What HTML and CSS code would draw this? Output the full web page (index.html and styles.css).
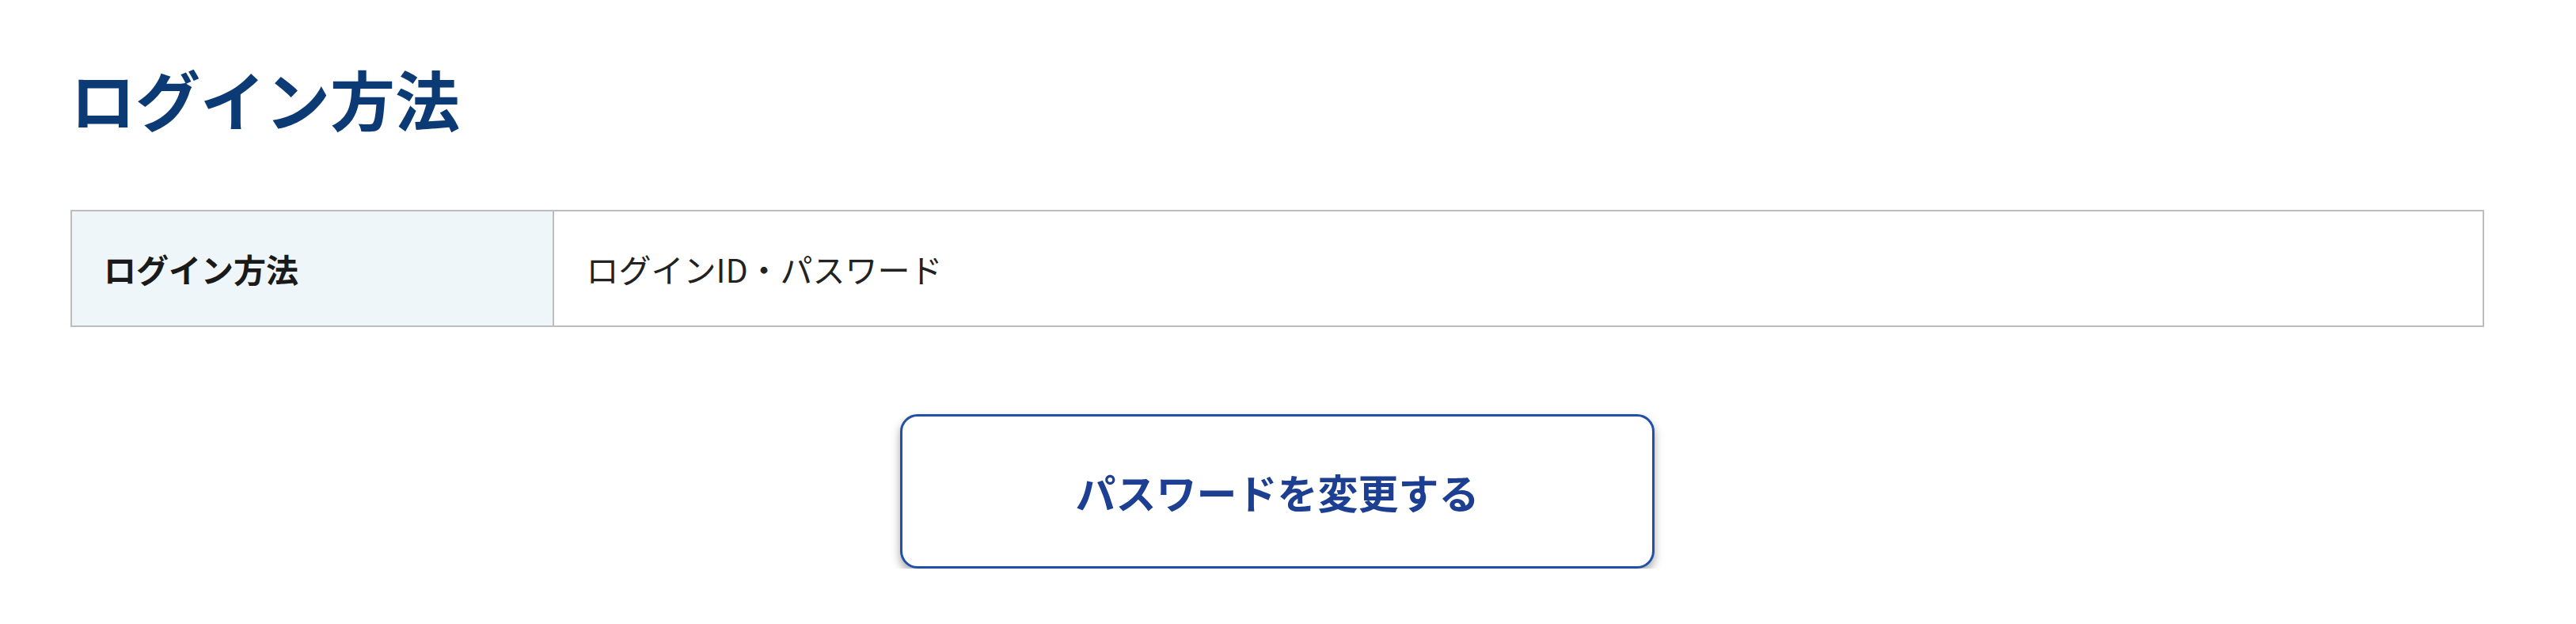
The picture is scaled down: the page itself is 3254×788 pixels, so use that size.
FILE: index.html
```html
<!DOCTYPE html>
<html lang="ja">
<head>
<meta charset="utf-8">
<title>ログイン方法</title>
<link rel="stylesheet" href="styles.css">
</head>
<body>
<main class="page">
  <h1 class="title">ログイン方法</h1>
  <table class="info">
    <tr>
      <th class="info-label">ログイン方法</th>
      <td class="info-value">ログインID・パスワード</td>
    </tr>
  </table>
  <div class="actions">
    <button class="btn-outline" type="button">パスワードを変更する</button>
  </div>
</main>
</body>
</html>
```

FILE: styles.css
```css
html, body {
  margin: 0;
  padding: 0;
  background: #ffffff;
}
body {
  font-family: "Noto Sans CJK JP", "Noto Sans", sans-serif;
  color: #222222;
}
.page {
  width: 3049px;
  padding: 0 0 0 89px;
  box-sizing: content-box;
}
.title {
  margin: 78px 0 0 0;
  font-size: 82px;
  line-height: 92px;
  font-weight: 700;
  color: #0b3a74;
}
.info {
  margin-top: 95px;
  width: 100%;
  border-collapse: collapse;
  border: 2px solid #bdbdbd;
}
.info-label,
.info-value {
  border: 2px solid #bdbdbd;
  padding: 41px 40px;
  font-size: 41px;
  line-height: 62px;
  text-align: left;
  vertical-align: middle;
}
.info-label {
  width: 20%;
  box-sizing: border-box;
  background: #eef6fa;
  font-weight: 700;
  color: #1a1a1a;
}
.info-value {
  font-weight: 400;
  color: #222222;
}
.actions {
  display: flex;
  justify-content: center;
  margin-top: 110px;
}
.btn-outline {
  width: 953px;
  height: 195px;
  background: #ffffff;
  border: 3px solid #2150a6;
  border-radius: 22px;
  box-shadow: 0 6px 12px rgba(0, 0, 0, 0.35);
  font-family: "Noto Sans CJK JP", "Noto Sans", sans-serif;
  font-size: 51px;
  font-weight: 700;
  color: #1d3f92;
  cursor: pointer;
}
```
